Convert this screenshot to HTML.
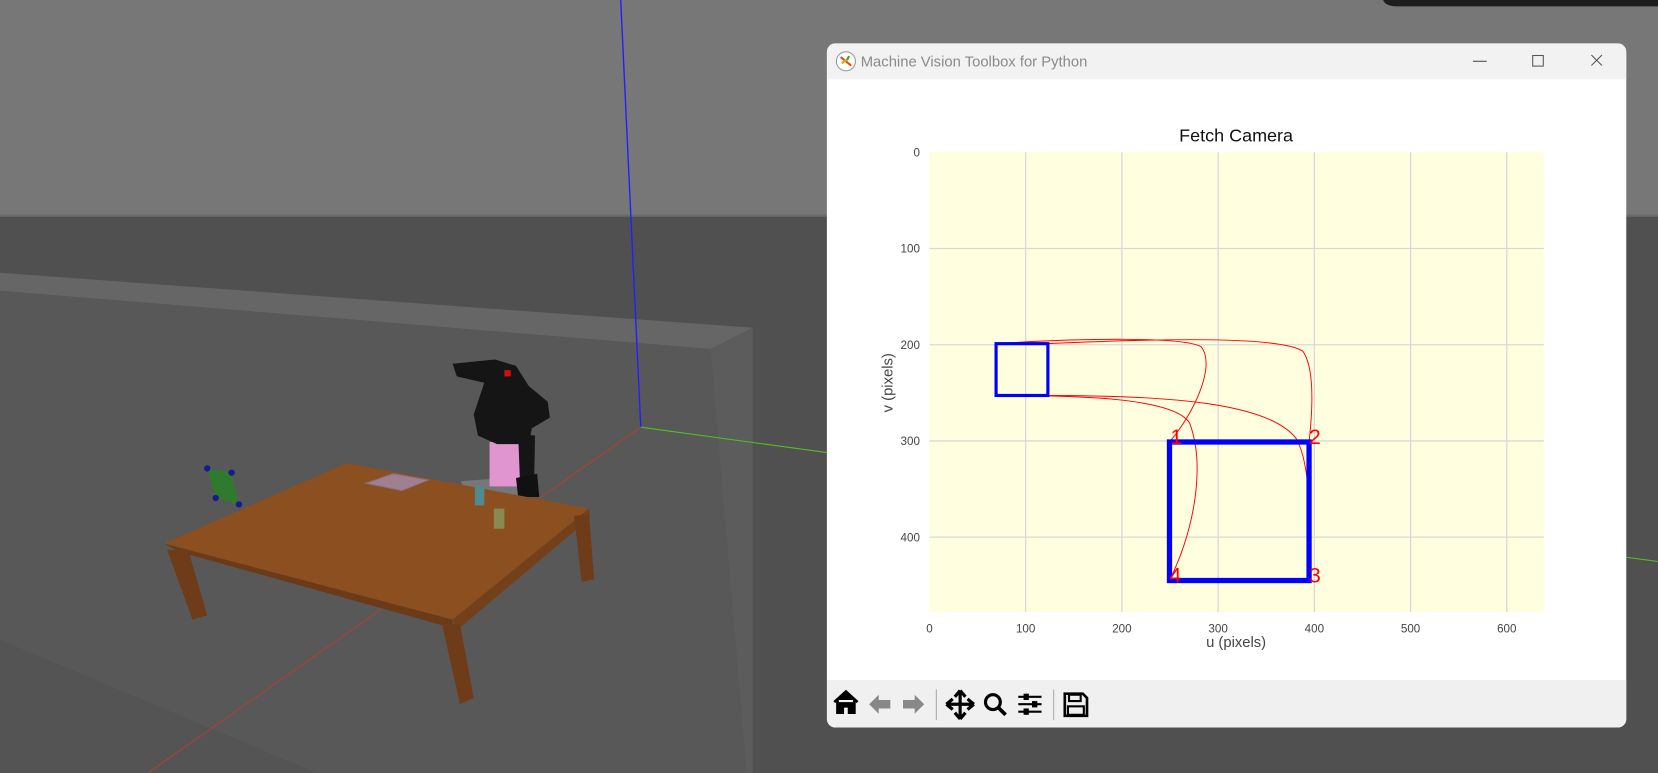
<!DOCTYPE html>
<html><head><meta charset="utf-8"><style>
html,body{margin:0;padding:0;width:1658px;height:773px;overflow:hidden;background:#505050}
#s{position:absolute;left:0;top:0;width:1568px;height:731px;transform:scale(1.05740);transform-origin:0 0;font-family:"Liberation Sans",sans-serif}
.win{position:absolute;left:782px;top:41px;width:756px;height:647px;border-radius:8px;background:#fff;overflow:hidden}
.tb{position:absolute;left:0;top:0;width:100%;height:34px;background:#f2f2f2}
.tt{position:absolute;left:32px;top:9px;font-size:14px;color:#8a8a8a}
.bar{position:absolute;left:0;top:602px;width:100%;height:45px;background:#f0f0f0}
</style></head><body><div id="s">
<svg width="1568" height="731" style="position:absolute;left:0;top:0">
<rect x="0" y="0" width="1568" height="205" fill="#777"/>
<rect x="0" y="203" width="1568" height="3" fill="#6a6a6a"/>
<rect x="0" y="205" width="1568" height="526" fill="#505050"/>
<polygon points="0,258 712,310 672,330 0,275" fill="#666"/>
<polygon points="0,275 672,330 706,731 0,731" fill="#585858"/>
<polygon points="672,330 712,310 712,731 706,731" fill="#5c5c5c"/>
<polygon points="0,605 300,731 0,731" fill="#545454"/>
<path d="M1308,0 L1568,0 L1568,6 L1322,6 Q1310,6 1308,0Z" fill="#1e1e1e"/>
<line x1="587" y1="0" x2="606" y2="404" stroke="#2020ff" stroke-width="1.3"/>
<line x1="606" y1="404" x2="782" y2="428" stroke="#50c020" stroke-width="1"/>
<line x1="1538" y1="527" x2="1568" y2="531" stroke="#50c020" stroke-width="1"/>
<line x1="606" y1="404" x2="140" y2="731" stroke="#b04030" stroke-width="1"/>
<!-- robot -->
<polygon points="436,455 505,450 510,470 440,470" fill="#777"/>
<rect x="463" y="418" width="40" height="42" fill="#e095d0"/>
<path d="M490,410 L506,412 L505,460 L492,462Z" fill="#151515"/>
<path d="M428,344 L468,340 L488,346 L500,365 L518,380 L520,395 L503,405 L500,420 L470,420 L452,412 L448,392 L458,362 L432,356Z" fill="#151515"/>
<path d="M488,452 L508,448 L510,470 L490,470Z" fill="#111"/>
<rect x="477" y="350" width="6" height="6" fill="#d01010"/>
<!-- table -->
<polygon points="155,514 328,438 557,481 428,586" fill="#8b4f20"/>
<polygon points="155,514 428,586 428,594 170,522" fill="#6b3a18"/>
<polygon points="428,586 557,481 558,490 432,596" fill="#74401a"/>
<polygon points="158,520 178,520 196,582 182,586" fill="#6e3c18"/>
<polygon points="418,590 435,590 448,660 435,666" fill="#6e3c18"/>
<polygon points="543,488 557,486 562,548 550,550" fill="#6e3c18"/>
<polygon points="346,457 372,448 405,454 380,464" fill="#a08090" stroke="#8a7080"/>
<rect x="449" y="460" width="9" height="18" fill="#4f8a90"/>
<rect x="467" y="481" width="10" height="19" fill="#8a8a50"/>
<polygon points="196,443 219,447 226,477 204,471" fill="#2f7a2f"/>
<circle cx="196" cy="443" r="3" fill="#1a1a90"/><circle cx="219" cy="447" r="3" fill="#1a1a90"/><circle cx="226" cy="477" r="3" fill="#1a1a90"/><circle cx="204" cy="471" r="3" fill="#1a1a90"/>
</svg>
<div class="win">
<div class="tb">
<svg style="position:absolute;left:8px;top:7px" width="20" height="20"><circle cx="10" cy="10" r="9" fill="#fff" stroke="#999"/><path d="M5,6 L15,14" stroke="#e05010" stroke-width="2"/><path d="M6,12 L10,9" stroke="#f0a000" stroke-width="2"/><path d="M13,5 L11,9" stroke="#40a030" stroke-width="2"/></svg>
<div class="tt">Machine Vision Toolbox for Python</div>
<svg style="position:absolute;left:600px;top:0" width="156" height="34"><line x1="11" y1="17" x2="24" y2="17" stroke="#555"/><rect x="67.5" y="11.5" width="10" height="10" fill="none" stroke="#555"/><path d="M123,11 L133,21 M133,11 L123,21" stroke="#555"/></svg>
</div>
<svg style="position:absolute;left:0;top:0" width="756" height="647" font-family="Liberation Sans, sans-serif">
<g transform="translate(-782,-41)">
<rect x="879" y="144" width="581" height="435" fill="#ffffe0"/>
<g stroke="#d8d8d8" stroke-width="1.2">
<line x1="970" y1="144" x2="970" y2="579"/><line x1="1061" y1="144" x2="1061" y2="579"/><line x1="1152" y1="144" x2="1152" y2="579"/><line x1="1243" y1="144" x2="1243" y2="579"/><line x1="1334" y1="144" x2="1334" y2="579"/><line x1="1425" y1="144" x2="1425" y2="579"/>
<line x1="879" y1="235" x2="1460" y2="235"/><line x1="879" y1="326" x2="1460" y2="326"/><line x1="879" y1="417" x2="1460" y2="417"/><line x1="879" y1="508" x2="1460" y2="508"/>
</g>
<g font-size="11" fill="#444" text-anchor="middle">
<text x="879" y="598">0</text><text x="970" y="598">100</text><text x="1061" y="598">200</text><text x="1152" y="598">300</text><text x="1243" y="598">400</text><text x="1334" y="598">500</text><text x="1425" y="598">600</text>
</g>
<g font-size="11" fill="#444" text-anchor="end">
<text x="870" y="148">0</text><text x="870" y="239">100</text><text x="870" y="330">200</text><text x="870" y="421">300</text><text x="870" y="512">400</text>
</g>
<text x="1169" y="134" font-size="17" text-anchor="middle" fill="#111">Fetch Camera</text>
<text x="1169" y="612" font-size="14" text-anchor="middle" fill="#444">u (pixels)</text>
<text transform="translate(844,362) rotate(-90)" font-size="14" text-anchor="middle" fill="#444">v (pixels)</text>
<g fill="none" stroke="#ff0000" stroke-width="0.9">
<path d="M942,325 C1020,320 1120,318 1136,328 C1150,345 1130,390 1106,418"/>
<path d="M991,325 C1100,320 1210,318 1232,332 C1245,350 1240,400 1238,418"/>
<path d="M942,374 C1020,374 1110,376 1125,400 C1140,440 1130,500 1106,549"/>
<path d="M991,374 C1100,374 1200,380 1226,415 C1240,440 1240,500 1238,549"/>
</g>
<rect x="942" y="325" width="49" height="49" fill="none" stroke="#0000ff" stroke-width="3"/>
<rect x="1106" y="418" width="132" height="131" fill="none" stroke="#0000ff" stroke-width="5"/>
<g font-size="20" fill="#ff0000">
<text x="1107" y="420">1</text><text x="1238" y="420">2</text><text x="1238" y="551">3</text><text x="1106" y="551">4</text>
</g>
</g>
</svg>
<div class="bar">
<svg width="260" height="45">
<path d="M7,21 L18,11 L29,21 M10,19 L10,31 L15,31 L15,25 L21,25 L21,31 L26,31 L26,19" fill="#000" stroke="#000" stroke-width="2.5"/>
<path d="M40,23 L49,14 L49,19 L60,19 L60,27 L49,27 L49,32Z" fill="#888"/>
<path d="M92,23 L83,14 L83,19 L72,19 L72,27 L83,27 L83,32Z" fill="#888"/>
<line x1="103.5" y1="9" x2="103.5" y2="38" stroke="#aaa"/>
<path d="M126,10 L121,16 M126,10 L131,16 M126,37 L121,31 M126,37 L131,31 M113,23 L119,18 M113,23 L119,28 M139,23 L133,18 M139,23 L133,28 M126,12 L126,35 M115,23 L137,23" stroke="#000" stroke-width="3" fill="none"/>
<circle cx="157" cy="21" r="7" fill="none" stroke="#000" stroke-width="3"/><line x1="162" y1="26" x2="169" y2="33" stroke="#000" stroke-width="3.5"/>
<g stroke="#000" stroke-width="2"><line x1="181" y1="16" x2="203" y2="16"/><line x1="181" y1="23" x2="203" y2="23"/><line x1="181" y1="30" x2="203" y2="30"/></g>
<rect x="186" y="13" width="5" height="6" fill="#000"/><rect x="194" y="20" width="5" height="6" fill="#000"/><rect x="186" y="27" width="5" height="6" fill="#000"/>
<line x1="214.5" y1="9" x2="214.5" y2="38" stroke="#aaa"/>
<path d="M225,13 L242,13 L246,17 L246,34 L225,34Z" fill="none" stroke="#000" stroke-width="2.5"/>
<rect x="229" y="14" width="11" height="6" fill="none" stroke="#000" stroke-width="2"/><rect x="228" y="25" width="15" height="8" fill="none" stroke="#000" stroke-width="2"/>
</svg>
</div>
</div>
</div></body></html>
